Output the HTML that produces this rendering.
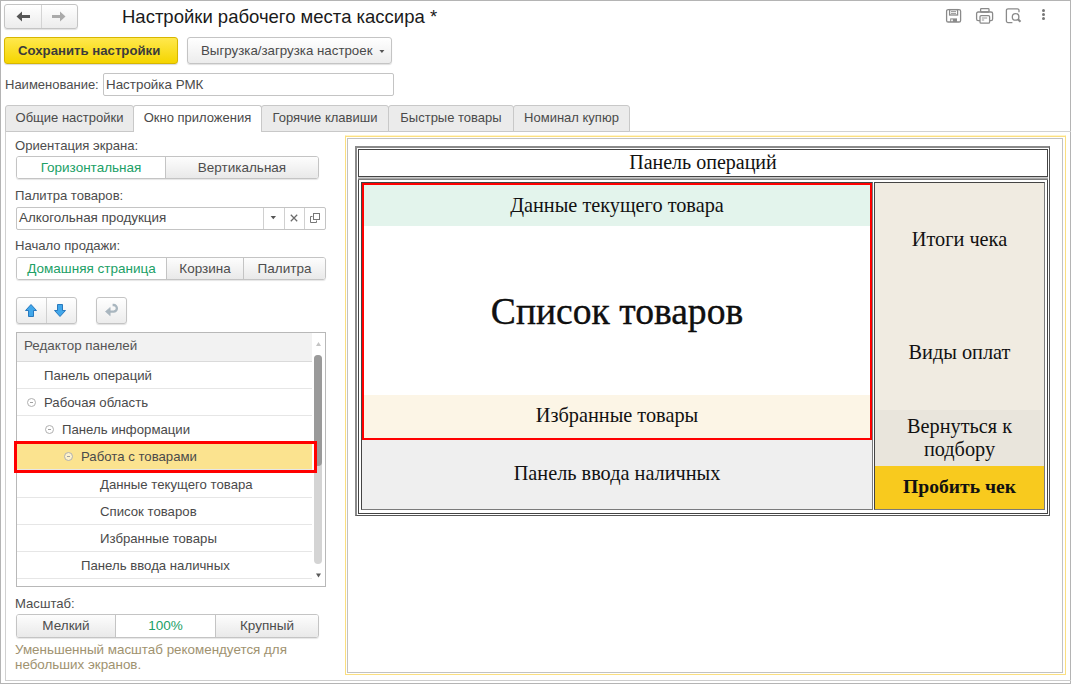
<!DOCTYPE html>
<html><head><meta charset="utf-8">
<style>
*{box-sizing:border-box;margin:0;padding:0}
html,body{width:1071px;height:684px;overflow:hidden;background:#fff}
body{position:relative;font-family:"Liberation Sans",sans-serif;font-size:13.5px;color:#4d4d4d}
.a{position:absolute}
.t{position:absolute;white-space:nowrap;line-height:15px;font-size:13.4px}
.btn{position:absolute;border:1px solid #c4c4c4;border-radius:3px;background:linear-gradient(#fff,#ececec);box-shadow:0 1px 1px rgba(0,0,0,.12)}
.seg{position:absolute;border:1px solid #c4c4c4;border-radius:3px;overflow:hidden;box-shadow:0 1px 1px rgba(0,0,0,.10)}
.seg>div{position:absolute;top:0;bottom:0;text-align:center;line-height:22px;background:linear-gradient(#fdfdfd,#e9e9e9)}
.seg>div.on{background:#fff;color:#20a066}
.seg>div.vd{position:absolute;top:0;bottom:0;width:1px;background:#c4c4c4}
.tab{position:absolute;top:105px;height:27px;font-size:13px;color:#505050;border:1px solid #c8c8c8;border-radius:3px 3px 0 0;background:#ebebeb;line-height:24px;text-align:center;color:#4a4a4a}
.tab.on{background:#fff;height:27px;border-bottom:none}
.serif{font-family:"Liberation Serif",serif;color:#111;position:absolute;white-space:nowrap;text-align:center}
.row{position:absolute;left:17px;width:295px;height:1px;background:#e6e6e6}
.circ{position:absolute;width:9px;height:9px;border:1px solid #b0b0b0;border-radius:50%}
.circ:after{content:"";position:absolute;left:2px;top:3px;width:3px;height:1px;background:#a0a0a0}
</style></head><body>
<!-- page border -->
<div class="a" style="left:0;top:0;width:1071px;height:684px;border:1px solid #b4b4b4"></div>

<!-- nav buttons -->
<div class="btn" style="left:4px;top:4px;width:74px;height:25px"></div>
<div class="a" style="left:41px;top:5px;width:1px;height:23px;background:#d4d4d4"></div>
<svg class="a" style="left:14px;top:10px" width="18" height="14" viewBox="0 0 18 14">
  <path d="M2.5 6.5 L8 1.5 L8 5 L16 5 L16 8 L8 8 L8 11.5 Z" fill="#555"/>
</svg>
<svg class="a" style="left:50px;top:10px" width="18" height="14" viewBox="0 0 18 14">
  <path d="M15.5 6.5 L10 1.5 L10 5 L2 5 L2 8 L10 8 L10 11.5 Z" fill="#aaa"/>
</svg>

<!-- title -->
<div class="t" style="left:122px;top:6.5px;font-size:18.5px;line-height:20px;color:#1a1a1a">Настройки рабочего места кассира *</div>

<!-- header icons -->
<svg class="a" style="left:944px;top:6px" width="20" height="20" viewBox="0 0 20 20" fill="none" stroke="#8a8a8a" stroke-width="1.3">
  <rect x="2.6" y="3.6" width="14" height="12.4" rx="1.6"/>
  <rect x="5.6" y="3.6" width="8" height="5.4"/>
  <path d="M7 5.6h5M7 7.4h5" stroke-width="0.9"/>
  <rect x="6.2" y="12.4" width="6.8" height="3.6" fill="#8a8a8a" stroke="none"/>
  <rect x="7.2" y="13.4" width="1.6" height="1.8" fill="#fff" stroke="none"/>
</svg>
<svg class="a" style="left:974px;top:6px" width="20" height="20" viewBox="0 0 20 20" fill="none" stroke="#8a8a8a" stroke-width="1.3">
  <rect x="6.6" y="2.6" width="8.4" height="3.4" rx="0.8"/>
  <rect x="2.6" y="6" width="16" height="8.6" rx="1.6"/>
  <rect x="6" y="9.6" width="9.6" height="7.6" rx="1.2" fill="#fff"/>
  <path d="M7.8 12h5.4M7.8 14h2.4" stroke-width="0.9"/>
</svg>
<svg class="a" style="left:1004px;top:6px" width="20" height="20" viewBox="0 0 20 20" fill="none" stroke="#8a8a8a" stroke-width="1.3">
  <path d="M8.4 16.6H4a1.6 1.6 0 0 1-1.6-1.6V4.4a1.6 1.6 0 0 1 1.6-1.6h9.4a1.6 1.6 0 0 1 1.6 1.6v1.8"/>
  <circle cx="11.6" cy="10.9" r="3.3"/>
  <path d="M13.9 13.2l2.6 2.6" stroke-width="2.1"/>
</svg>
<div class="a" style="left:1041.5px;top:9px;width:3.4px;height:3.4px;border-radius:50%;background:#777"></div>
<div class="a" style="left:1041.5px;top:13.1px;width:3.4px;height:3.4px;border-radius:50%;background:#777"></div>
<div class="a" style="left:1041.5px;top:17.1px;width:3.4px;height:3.4px;border-radius:50%;background:#777"></div>

<!-- save button -->
<div class="a" style="left:4px;top:37px;width:174px;height:27px;border:1px solid #d7b600;border-radius:3px;background:linear-gradient(#ffe84d,#f5d500);box-shadow:0 1px 1px rgba(0,0,0,.15)"></div>
<div class="t" style="left:18px;top:43px;font-weight:bold;font-size:13.2px;color:#3b3b3b">Сохранить настройки</div>

<!-- export button -->
<div class="btn" style="left:187px;top:37px;width:205px;height:27px"></div>
<div class="t" style="left:201px;top:43px;font-size:13.3px;color:#4a4a4a">Выгрузка/загрузка настроек</div>
<svg class="a" style="left:377px;top:48px" width="9" height="7" viewBox="0 0 9 7"><path d="M2.4 2H7.4L4.9 5Z" fill="#555"/></svg>

<!-- name -->
<div class="t" style="left:5px;top:77px;font-size:13px">Наименование:</div>
<div class="a" style="left:103px;top:73px;width:291px;height:23px;border:1px solid #c4c4c4;border-radius:2px;background:#fff"></div>
<div class="t" style="left:106px;top:77px;color:#4a4a4a">Настройка РМК</div>

<!-- tab panel frame -->
<div class="a" style="left:5px;top:131px;width:1066px;height:550px;border-top:1px solid #d2d2d2;border-left:1px solid #d0d0d0;border-bottom:1px solid #cdcdcd"></div>

<!-- tabs -->
<div class="tab" style="left:5px;width:129px">Общие настройки</div>
<div class="tab on" style="left:133px;width:129px">Окно приложения</div>
<div class="tab" style="left:261px;width:128px">Горячие клавиши</div>
<div class="tab" style="left:388px;width:126px">Быстрые товары</div>
<div class="tab" style="left:513px;width:117px">Номинал купюр</div>

<!-- LEFT PANEL -->
<div class="t" style="font-size:13.1px;left:15px;top:138px">Ориентация экрана:</div>
<div class="seg" style="left:16px;top:156px;width:303px;height:23px">
  <div class="on" style="left:0;width:148px">Горизонтальная</div>
  <div class="vd" style="left:148px"></div>
  <div style="left:149px;right:0">Вертикальная</div>
</div>

<div class="t" style="font-size:13.1px;left:15px;top:188px">Палитра товаров:</div>
<div class="a" style="left:16px;top:207px;width:310px;height:23px;border:1px solid #c4c4c4;border-radius:2px;background:#fff"></div>
<div class="t" style="left:19px;top:210px;color:#4a4a4a">Алкогольная продукция</div>
<div class="a" style="left:263px;top:208px;width:1px;height:21px;background:#d0d0d0"></div>
<div class="a" style="left:284px;top:208px;width:1px;height:21px;background:#d0d0d0"></div>
<div class="a" style="left:304px;top:208px;width:1px;height:21px;background:#d0d0d0"></div>
<svg class="a" style="left:269px;top:214px" width="9" height="7" viewBox="0 0 9 7"><path d="M1.6 2H7L4.3 5.2Z" fill="#555"/></svg>
<svg class="a" style="left:289px;top:212.6px" width="10" height="10" viewBox="0 0 10 10"><path d="M1.8 1.8L8.2 8.2M8.2 1.8L1.8 8.2" stroke="#6a6a6a" stroke-width="1.25"/></svg>
<svg class="a" style="left:309px;top:212px" width="12" height="12" viewBox="0 0 12 12" fill="none" stroke="#777" stroke-width="1"><rect x="4.5" y="1.5" width="6" height="6"/><path d="M3.5 4.5H1.5V10.5H7.5V8.5"/></svg>

<div class="t" style="font-size:13.1px;left:15px;top:238px">Начало продажи:</div>
<div class="seg" style="left:16px;top:257px;width:310px;height:23px">
  <div class="on" style="left:0;width:149px">Домашняя страница</div>
  <div class="vd" style="left:149px"></div>
  <div style="left:150px;width:76px">Корзина</div>
  <div class="vd" style="left:226px"></div>
  <div style="left:227px;right:0">Палитра</div>
</div>

<!-- arrow buttons -->
<div class="btn" style="left:16px;top:297px;width:61px;height:27px"></div>
<div class="a" style="left:46px;top:298px;width:1px;height:25px;background:#d0d0d0"></div>
<svg class="a" style="left:24px;top:303px" width="14" height="15" viewBox="0 0 14 15"><path d="M7 1.5L12.5 7.5H9.5V13.5H4.5V7.5H1.5Z" fill="#41a7ea" stroke="#1c6fb8" stroke-width="0.9" stroke-linejoin="round"/></svg>
<svg class="a" style="left:53px;top:303px" width="14" height="15" viewBox="0 0 14 15"><path d="M7 13.5L12.5 7.5H9.5V1.5H4.5V7.5H1.5Z" fill="#41a7ea" stroke="#1c6fb8" stroke-width="0.9" stroke-linejoin="round"/></svg>
<div class="btn" style="left:96px;top:297px;width:31px;height:27px"></div>
<svg class="a" style="left:103px;top:303px" width="16" height="15" viewBox="0 0 16 15"><path d="M6 8.6H10.6A3.3 3.3 0 0 0 10.6 2H9.6" fill="none" stroke="#a9b6bf" stroke-width="2.3"/><path d="M2.4 8.6L7.2 4.4V12.8Z" fill="#a9b6bf" stroke="#a9b6bf" stroke-width="0.6" stroke-linejoin="round"/></svg>

<!-- tree table -->
<div class="a" style="left:16px;top:332px;width:310px;height:255px;border:1px solid #b8b8b8;background:#fff"></div>
<div class="a" style="left:17px;top:333px;width:295px;height:28px;background:#f2f2f2"></div>
<div class="row" style="top:361px;background:#dadada"></div>
<div class="t" style="left:24px;top:338px;color:#555">Редактор панелей</div>
<div class="row" style="top:388px"></div>
<div class="row" style="top:415px"></div>
<div class="row" style="top:442px"></div>
<div class="row" style="top:469px"></div>
<div class="row" style="top:497px"></div>
<div class="row" style="top:524px"></div>
<div class="row" style="top:551px"></div>
<div class="row" style="top:578px"></div>

<div class="t" style="left:44px;top:367.5px;font-size:13.2px;color:#4a4a4a">Панель операций</div>
<div class="circ" style="left:26.5px;top:397.5px"></div>
<div class="t" style="left:44px;top:394.5px;font-size:13.2px;color:#4a4a4a">Рабочая область</div>
<div class="circ" style="left:45px;top:425px"></div>
<div class="t" style="left:62px;top:421.5px;font-size:13.2px;color:#4a4a4a">Панель информации</div>



<div class="t" style="left:100px;top:476.5px;font-size:13.2px;color:#4a4a4a">Данные текущего товара</div>
<div class="t" style="left:100px;top:503.5px;font-size:13.2px;color:#4a4a4a">Список товаров</div>
<div class="t" style="left:100px;top:530.5px;font-size:13.2px;color:#4a4a4a">Избранные товары</div>
<div class="t" style="left:81px;top:557.5px;font-size:13.2px;color:#4a4a4a">Панель ввода наличных</div>

<!-- scrollbar -->
<div class="a" style="left:314px;top:355px;width:8px;height:209px;border-radius:4px;background:#d4d4d4"></div>
<div class="a" style="left:314px;top:355px;width:8px;height:111px;border-radius:4px;background:#9a9a9a"></div>
<svg class="a" style="left:314px;top:340px" width="9" height="9" viewBox="0 0 9 9"><path d="M2 6H7L4.5 2Z" fill="#c4c4c4"/></svg>
<svg class="a" style="left:314px;top:571px" width="9" height="9" viewBox="0 0 9 9"><path d="M2 2.5H7L4.5 6.5Z" fill="#5a5a5a"/></svg>

<div class="a" style="left:17px;top:444px;width:295px;height:25px;background:#fbe38f"></div>
<div class="a" style="left:14px;top:441px;width:303px;height:32px;border:3px solid #ff0000"></div>
<div class="circ" style="left:63.5px;top:452px;background:rgba(255,255,255,.55)"></div>
<div class="t" style="left:81px;top:448.5px;font-size:13.2px;color:#4a4a4a">Работа с товарами</div>
<div class="t" style="font-size:13.1px;left:15px;top:596px">Масштаб:</div>
<div class="seg" style="left:16px;top:614px;width:303px;height:24px">
  <div style="left:0;width:98px">Мелкий</div>
  <div class="vd" style="left:98px"></div>
  <div class="on" style="left:99px;width:99px">100%</div>
  <div class="vd" style="left:198px"></div>
  <div style="left:199px;right:0">Крупный</div>
</div>
<div class="t" style="left:15px;top:642px;color:#a0926f">Уменьшенный масштаб рекомендуется для</div>
<div class="t" style="left:15px;top:657px;color:#a0926f">небольших экранов.</div>

<!-- RIGHT PANEL -->
<div class="a" style="left:345px;top:135px;width:721px;height:540px;border:1px solid #fce9a6;border-top-color:#fff4cc"></div>
<div class="a" style="left:345px;top:136px;width:721px;height:539px;border:1px solid #fbdf80"></div>
<div class="a" style="left:347px;top:138px;width:716px;height:535px;border:1px solid #c2c2c2"></div>

<!-- outer table -->
<div class="a" style="left:355px;top:146px;width:695px;height:370px;border-style:solid;border-width:2px 1px 1px 2px;border-color:#8a8a8a #555 #555 #8a8a8a"></div>
<div class="a" style="left:358px;top:149px;width:690px;height:28px;border:1px solid #444"></div>
<div class="serif" style="left:358px;top:151px;width:690px;font-size:20px;line-height:22px">Панель операций</div>
<div class="a" style="left:358px;top:177px;width:690px;height:337px;border:1px solid #444;border-top:0"></div>
<div class="a" style="left:358px;top:177px;width:690px;height:3px;background:linear-gradient(#dcdcdc,#a8a8a8 50%,#666 100%)"></div>

<!-- left cell -->
<div class="a" style="left:361px;top:182px;width:512px;height:328px;border:1px solid #444;border-right-color:#7a7a7a;border-bottom-color:#7a7a7a;background:#efefef"></div>
<div class="a" style="left:362px;top:183px;width:510px;height:257px;border:2px solid #ff0000;background:#fff"></div>
<div class="a" style="left:364px;top:185px;width:506px;height:41px;background:#e3f4ec"></div>
<div class="a" style="left:364px;top:395px;width:506px;height:43px;background:#fcf5e6"></div>
<div class="serif" style="left:364px;top:194px;width:506px;font-size:20.3px;line-height:22px">Данные текущего товара</div>
<div class="serif" style="left:364px;top:291px;width:506px;font-size:37.6px;line-height:41px;-webkit-text-stroke:0.35px #000">Список товаров</div>
<div class="serif" style="left:364px;top:404px;width:506px;font-size:20.3px;line-height:22px">Избранные товары</div>
<div class="serif" style="left:362px;top:462px;width:510px;font-size:20.3px;line-height:22px">Панель ввода наличных</div>

<!-- right cell -->
<div class="a" style="left:874px;top:182px;width:171px;height:328px;border:1px solid #444;border-right-color:#7a7a7a;border-bottom-color:#7a7a7a;background:#f0ebe1"></div>
<div class="a" style="left:875px;top:410px;width:169px;height:56px;background:#e9e5dc"></div>
<div class="a" style="left:875px;top:466px;width:169px;height:43px;background:#f8ca1e"></div>
<div class="serif" style="left:875px;top:228px;width:169px;font-size:20.3px;line-height:22px">Итоги чека</div>
<div class="serif" style="left:875px;top:341px;width:169px;font-size:20.3px;line-height:22px">Виды оплат</div>
<div class="serif" style="left:875px;top:415px;width:169px;font-size:20.3px;line-height:23px;white-space:normal">Вернуться к<br>подбору</div>
<div class="serif" style="left:875px;top:476px;width:169px;font-size:19.6px;line-height:22px;font-weight:bold">Пробить чек</div>

</body></html>
